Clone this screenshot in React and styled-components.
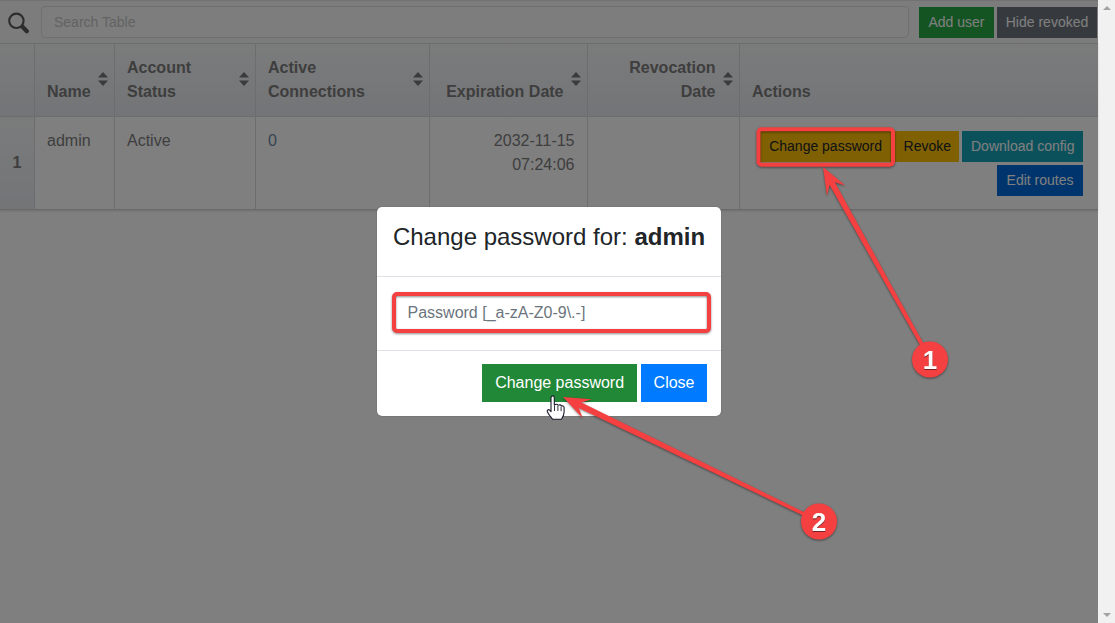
import React from "react";
import styled, { createGlobalStyle } from "styled-components";

const Global = createGlobalStyle`
  html, body { margin: 0; padding: 0; height: 100%; overflow: hidden; }
  body { font-family: "Liberation Sans", Arial, sans-serif; font-size: 16px; line-height: 24px; color: #7c7c7c; background: #fff; }
  * { box-sizing: border-box; }
`;

const Page = styled.div`
  position: relative;
  display: flex;
  width: 1115px;
  height: 623px;
  overflow: hidden;
`;
const Main = styled.main`
  position: relative;
  width: 1098px;
  height: 623px;
  background: #fff;
`;
const Toolbar = styled.div`
  display: flex;
  align-items: center;
  height: 43px;
  padding: 0 1px 0 8px;
  background: #f9f9fa;
  border-top: 1px solid #e4e5e7;
`;
const SearchIconBox = styled.span`
  display: flex;
  width: 21px;
  height: 22px;
  margin-right: 12px;
  margin-top: 1px;
  color: #5a5a5a;
`;
const SearchInput = styled.input`
  flex: 1;
  height: 32px;
  padding: 0 12px;
  font: 14px/20px "Liberation Sans", Arial, sans-serif;
  background: #fafafa;
  border: 1px solid #dcdee2;
  border-radius: 4px;
  margin-right: 10px;
  &::placeholder { color: #c4c6c8; opacity: 1; }
`;
const Btn = styled.button`
  height: ${p => p.$h || 31}px;
  padding: 0 ${p => p.$px || 8}px 1px;
  border: 0;
  border-radius: 0;
  font: ${p => p.$fs || 14}px/20px "Liberation Sans", Arial, sans-serif;
  color: ${p => p.$fg || "#fff"};
  background: ${p => p.$bg};
  white-space: nowrap;
  margin-left: ${p => p.$ml || 0}px;
`;
const DataTable = styled.table`
  width: 1098px;
  table-layout: fixed;
  border-collapse: collapse;
  border-bottom: 1px solid #d0d2d4;
  box-shadow: 0 1px 2px rgba(0,0,0,.15);
`;
const HeadRow = styled.tr`
  height: 73px;
  background: linear-gradient(#f6f7f8, #e6e9ee);
`;
const Th = styled.th`
  position: relative;
  padding: 12px 23px 12px 12.5px;
  vertical-align: bottom;
  text-align: ${p => p.$right ? "right" : "left"};
  font-weight: 700;
  border-left: 1px solid #d8dade;
  border-top: 1px solid #d8dade;
  border-bottom: 1px solid #d8dade;
  &:first-child { border-left: 0; }
`;
const SortMark = styled.svg`
  position: absolute;
  right: 6px;
  top: 28px;
  width: 10px;
  height: 14px;
  color: #767676;
`;
const BodyRow = styled.tr`
  height: 93px;
  background: #ffffff;
`;
const RowHead = styled.th`
  padding: 0 12.5px;
  text-align: left;
  font-weight: 700;
  vertical-align: middle;
  background: linear-gradient(#f6f7f8, #e6e9ee);
  line-height: 24px;
`;
const Td = styled.td`
  padding: 12px 12px 12px 12.5px;
  vertical-align: top;
  text-align: ${p => p.$right ? "right" : "left"};
  border-left: 1px solid #d8dade;
`;
const ConnLink = styled.span`
  color: #6a8aa4;
`;
const ActionsBox = styled.div`
  display: flex;
  flex-wrap: wrap;
  justify-content: flex-end;
  gap: 3px;
  margin: 2px 3px 0 0;
`;
const Backdrop = styled.div`
  position: absolute;
  inset: 0;
  display: flex;
  justify-content: center;
  align-items: flex-start;
  padding-top: 207px;
  background: rgba(0,0,0,.5);
`;
const Modal = styled.div`
  width: 344px;
  height: 209px;
  background: #fff;
  border-radius: 5px;
  color: #212529;
  box-shadow: 0 0 1px rgba(0,0,0,.5);
`;
const ModalHead = styled.div`
  height: 70px;
  padding-top: 15px;
  text-align: center;
  font-size: 24px;
  line-height: 29px;
  border-bottom: 1px solid #dee2e6;
`;
const ModalBody = styled.div`
  height: 74px;
  padding: 17px 13px 17px 18px;
  border-bottom: 1px solid #dee2e6;
`;
const PasswordInput = styled.input`
  width: 100%;
  height: 38px;
  padding: 0 11.5px;
  font: 16px/24px "Liberation Sans", Arial, sans-serif;
  border: 1px solid #ced4da;
  border-radius: 4px;
  &::placeholder { color: #6c757d; opacity: 1; }
`;
const ModalFoot = styled.div`
  display: flex;
  justify-content: flex-end;
  gap: 4px;
  padding: 13px 14px;
`;
const ScrollTrack = styled.div`
  display: flex;
  flex-direction: column;
  justify-content: space-between;
  align-items: center;
  width: 17px;
  height: 623px;
  padding: 6px 0;
  background: #f1f1f1;
`;
const ArrowUp = styled.span`
  width: 0; height: 0;
  border-left: 4px solid transparent;
  border-right: 4px solid transparent;
  border-bottom: 4px solid #a3a3a3;
`;
const ArrowDown = styled(ArrowUp)`
  border-bottom: 0;
  border-top: 4px solid #a3a3a3;
`;
const Annotations = styled.svg`
  position: absolute;
  left: 0;
  top: 0;
  width: 1115px;
  height: 623px;
  pointer-events: none;
`;
const Marks = styled.g`
  filter: drop-shadow(0 1px 1px rgba(0,0,0,.45));
`;
const BadgeText = styled.text`
  font: 700 26px "Liberation Sans", Arial, sans-serif;
  fill: #fff;
  text-anchor: middle;
  filter: drop-shadow(0.5px 1px 0 rgba(60,20,20,.7));
`;

const Sort = () => (
  <SortMark viewBox="0 0 10 14"><path fill="currentColor" d="M5 0 10 5.400H0ZM5 14 0 8.600H10Z" /></SortMark>
);

const RED = "#f44040";

function Arrow({ x1, y1, x2, y2 }) {
  const a = Math.atan2(y2 - y1, x2 - x1);
  const ca = Math.cos(a), sa = Math.sin(a);
  const pt = (d, o) => `${x2 - ca * d - sa * o},${y2 - sa * d + ca * o}`;
  const len = Math.hypot(x2 - x1, y2 - y1);
  const pts = [pt(0, 0), pt(27, 10.5), pt(19, 3), pt(len, 1.8), pt(len, -1.8), pt(19, -3), pt(27, -10.5)].join(" ");
  return <polygon points={pts} fill={RED} />;
}

function Badge({ cx, cy, n }) {
  return (
    <g>
      <circle cx={cx} cy={cy} r="18" fill={RED} />
      <BadgeText x={cx} y={cy + 9.5}>{n}</BadgeText>
    </g>
  );
}

export default function App() {
  return (
    <Page>
      <Global />
      <Main>
        <Toolbar>
          <SearchIconBox>
            <svg viewBox="0 0 21 22" width="21" height="22">
              <circle cx="8.4" cy="8.800" r="7.2" fill="none" stroke="currentColor" strokeWidth="2.1" />
              <path d="M14.500 14.800 18.800 19.200" stroke="currentColor" strokeWidth="4.2" strokeLinecap="round" />
            </svg>
          </SearchIconBox>
          <SearchInput placeholder="Search Table" readOnly />
          <Btn $bg="#28a745" $px={8} style={{ width: 75 }}>Add user</Btn>
          <Btn $bg="#6c757d" $ml={3} style={{ width: 100 }}>Hide revoked</Btn>
        </Toolbar>
        <DataTable>
          <colgroup>
            <col width="34" /><col width="80" /><col width="141" /><col width="174" /><col width="158" /><col width="152" /><col width="359" />
          </colgroup>
          <thead>
            <HeadRow>
              <Th />
              <Th>Name<Sort /></Th>
              <Th>Account Status<Sort /></Th>
              <Th>Active Connections<Sort /></Th>
              <Th $right>Expiration Date<Sort /></Th>
              <Th $right>Revocation Date<Sort /></Th>
              <Th>Actions</Th>
            </HeadRow>
          </thead>
          <tbody>
            <BodyRow>
              <RowHead>1</RowHead>
              <Td>admin</Td>
              <Td>Active</Td>
              <Td><ConnLink>0</ConnLink></Td>
              <Td $right>2032-11-15<br />07:24:06</Td>
              <Td />
              <Td>
                <ActionsBox>
                  <Btn $bg="#ffc107" $fg="#212529" $px={10}>Change password</Btn>
                  <Btn $bg="#ffc107" $fg="#212529" $px={8.5}>Revoke</Btn>
                  <Btn $bg="#17a2b8" $px={8.5}>Download config</Btn>
                  <Btn $bg="#0069d9" $px={9.500}>Edit routes</Btn>
                </ActionsBox>
              </Td>
            </BodyRow>
          </tbody>
        </DataTable>
        <Backdrop>
          <Modal>
            <ModalHead>Change password for: <b>admin</b></ModalHead>
            <ModalBody><PasswordInput placeholder="Password [_a-zA-Z0-9\.-]" readOnly /></ModalBody>
            <ModalFoot>
              <Btn $bg="#218838" $h={38} $fs={16} $px={13}>Change password</Btn>
              <Btn $bg="#007bff" $h={38} $fs={16} $px={12.5}>Close</Btn>
            </ModalFoot>
          </Modal>
        </Backdrop>
      </Main>
      <ScrollTrack><ArrowUp /><ArrowDown /></ScrollTrack>
      <Annotations viewBox="0 0 1115 623">
        <Marks>
          <rect x="758.500" y="129.300" width="134.500" height="35.500" rx="3" fill="none" stroke={RED} strokeWidth="4" />
          <rect x="394" y="294" width="315" height="37" rx="3" fill="none" stroke={RED} strokeWidth="4" />
          <Arrow x1={925} y1={350} x2={823} y2={167} />
          <Arrow x1={810} y1={517} x2={563} y2={397} />
          <Badge cx={930} cy={359.5} n="1" />
          <Badge cx={819} cy={521.5} n="2" />
        </Marks>
        <g transform="translate(546.500 395.500)">
          <path d="M4.500 2.200c0-2.400 3.300-2.400 3.300 0v7.200l1.200-.4c1.400-.5 2.200 0 2.600.7l1-.2c1.300-.3 2 .2 2.400 1 1.600-.5 2.600.3 2.600 1.700v4.200c0 2.800-1.400 5.600-2.600 7.400H6.200C4.200 21.500 2.200 19.200.9 16.500c-.8-1.700 1-3 2.300-1.800l1.300 1.400Z" fill="#fff" stroke="#1a1a2a" strokeWidth="1.1" strokeLinejoin="round" />
          <path d="M8 10v5.500M11.400 10.500v5M14.600 11.200v4.500" stroke="#1a1a2a" strokeWidth=".9" fill="none" />
        </g>
      </Annotations>
    </Page>
  );
}
